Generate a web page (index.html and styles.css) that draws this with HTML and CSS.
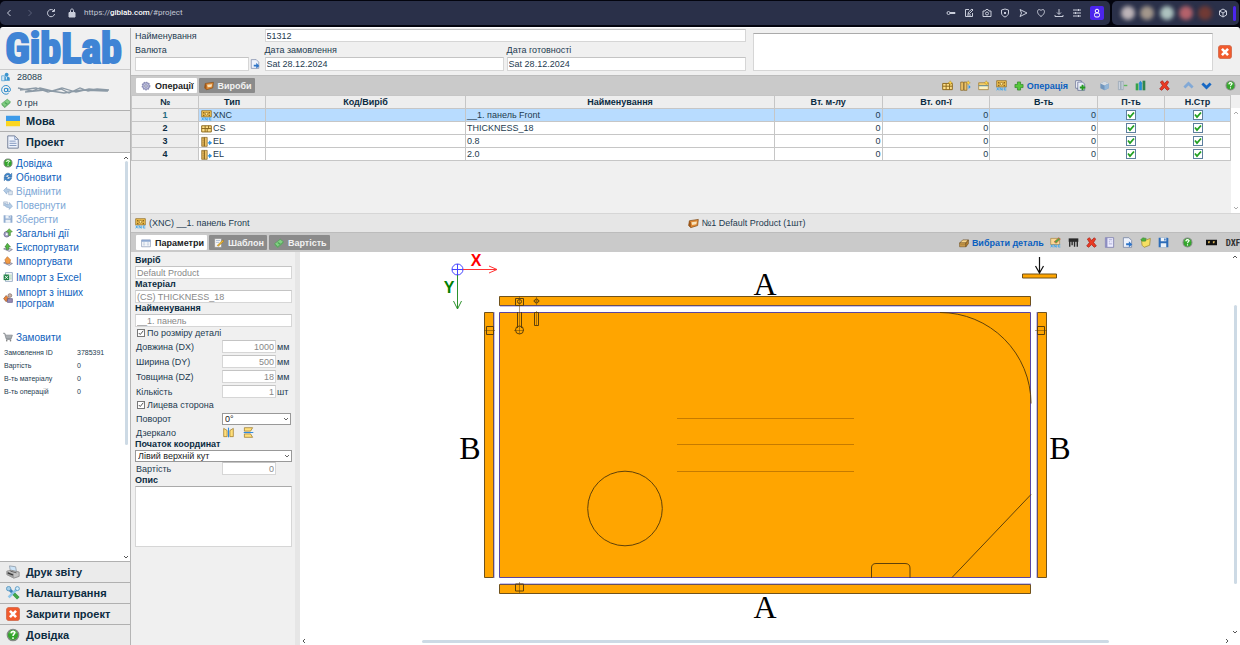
FILE: index.html
```html
<!DOCTYPE html>
<html lang="uk">
<head>
<meta charset="utf-8">
<meta name="viewport" content="width=device-width, initial-scale=1">
<title>GibLab</title>
<link rel="stylesheet" href="styles.css">
</head>
<body>
<svg class="sprite" aria-hidden="true">
  <symbol id="gear" viewBox="0 0 16 16"><circle cx="8" cy="8" r="5.5" fill="#b9bbdc" stroke="#8f91b8" stroke-width="3" stroke-dasharray="2.4 1.2"/><circle cx="8" cy="8" r="5.2" fill="#c0c2e2" stroke="#7779a3"/><circle cx="8" cy="8" r="2" fill="#eee" stroke="#696b91"/></symbol>
  <symbol id="product" viewBox="0 0 16 16"><path d="M2 4l13-2-1 9-10 3-3-3z" fill="#e08a35" stroke="#7d4a17"/><path d="M5 6l8-1-1 4-6 1z" fill="#f8e3bb"/><path d="M2 4l2 2v8l-3-3z" fill="#9a561a"/></symbol>
  <symbol id="xnc" viewBox="0 0 16 16"><path d="M1 1h14v9H1z" fill="#f3c453" stroke="#86611a"/><path d="M3 3h2v2H3zM11 3h2v2h-2zM3 7h2v2H3zM11 7h2v2h-2z" fill="#86611a"/><circle cx="8" cy="5.500" r="2" fill="#ffe89c" stroke="#86611a"/><path d="M1 11l3 4M4 11l-3 4M6 15v-4l3 4v-4M15 11.500h-3v3h3" fill="none" stroke="#3aa4ea" stroke-width="1.300"/></symbol>
  <symbol id="cs" viewBox="0 0 16 16"><path d="M1 4h14v9H1zM1 8h14M6 4v9M11 4v5M9 8v5" fill="#ffe089" stroke="#8d681d" stroke-width="1.400"/></symbol>
  <symbol id="el" viewBox="0 0 16 16"><path d="M1 2h4v13H1zM5 2h4v13H5z" fill="#eec266" stroke="#82601f"/><path d="M3 3v11" stroke="#82601f" stroke-dasharray="2 1"/><path d="M10 10h3M12.500 8L15 10l-2.500 2z" stroke="#2c94e4" stroke-width="1.500" fill="#2c94e4"/></symbol>
  <symbol id="cs-new" viewBox="0 0 16 16"><path d="M1 5h14v9H1zM1 9h14M6 5v9M11 5v9" fill="#ffe089" stroke="#8d681d" stroke-width="1.400"/><path d="M12 1l1 2 2 1-2 1-1 2-1-2-2-1 2-1z" fill="#ffd84b" stroke="#a8801b" stroke-width=".5"/></symbol>
  <symbol id="el-new" viewBox="0 0 16 16"><path d="M1 3h4v12H1zM6 3h4v12H6z" fill="#eec266" stroke="#82601f"/><path d="M11 10h4M12.500 7l3 3-3 3z" fill="#2c94e4"/><path d="M12 1l1 2 2 1-2 1-1 2-1-2-2-1 2-1z" fill="#ffd84b" stroke="#a8801b" stroke-width=".5"/></symbol>
  <symbol id="strip-new" viewBox="0 0 16 16"><path d="M1 4h14v4H1z" fill="#f4cf6d" stroke="#9a762a"/><path d="M1 8h14v6H1z" fill="#fff3c0" stroke="#9a762a"/><path d="M1 8.500h14" stroke="#3a9be0"/><path d="M12 1l1 2 2 1-2 1-1 2-1-2-2-1 2-1z" fill="#ffd84b" stroke="#a8801b" stroke-width=".5"/></symbol>
  <symbol id="plus" viewBox="0 0 16 16"><path d="M5.500 1.500h5v4h4v5h-4v4h-5v-4h-4v-5h4z" fill="#56c73c" stroke="#247f1c"/></symbol>
  <symbol id="copy" viewBox="0 0 16 16"><path d="M1 1h8v11H1z" fill="#fff" stroke="#535f8c"/><path d="M4 3h7l3 3v9H4z" fill="#e9ecf7" stroke="#535f8c"/><path d="M11 7v8M7 11h8" stroke="#249a21" stroke-width="2.800"/></symbol>
  <symbol id="cube-blue" viewBox="0 0 16 16"><path d="M2 5l6-3 6 3v7l-6 3-6-3z" fill="#7196bd"/><path d="M2 5l6-3 6 3-6 3z" fill="#d7dce2"/><path d="M8 8l6-3v7l-6 3z" fill="#93b6d8"/></symbol>
  <symbol id="split" viewBox="0 0 16 16"><path d="M2 2h3v12H2zM6 2h3v12H6z" fill="#ccd5df" stroke="#91a0b1"/><path d="M10 8h5" stroke="#5cba5d" stroke-width="2"/></symbol>
  <symbol id="chart" viewBox="0 0 16 16"><path d="M1 5h4v10H1z" fill="#37a34a"/><path d="M6 4h4v11H6zM5 5l3-4 3 4z" fill="#258ed4"/><path d="M11 1h4v14h-4z" fill="#31854d"/></symbol>
  <symbol id="delete" viewBox="0 0 16 16"><path d="M2 3l3-2 3 4 4-4 2 2-3 5 4 5-3 2-4-4-4 4-3-2 4-5z" fill="#ea3b23" stroke="#a51a12"/></symbol>
  <symbol id="up" viewBox="0 0 16 16"><path d="M2 11l6-6 6 6" fill="none" stroke="#82a9d6" stroke-width="4"/></symbol>
  <symbol id="down" viewBox="0 0 16 16"><path d="M2 5l6 6 6-6" fill="none" stroke="#1768c4" stroke-width="4"/></symbol>
  <symbol id="help" viewBox="0 0 16 16"><circle cx="8" cy="8" r="6.500" fill="#34a62c" stroke="#858a86" stroke-width="1.500"/><path d="M3.500 6a5 5 0 019 0z" fill="#8cdc7c"/><path d="M6 6c0-3 4-3 4-.5C10 7 8 7 8 9M8 10.500v2" stroke="#fff" stroke-width="1.600" fill="none"/></symbol>
  <symbol id="refresh" viewBox="0 0 16 16"><path d="M2 7c1-5 7-7 10-3l2-2v6H8l2-2C8 4 5 5 5 7zM14 9c-1 5-7 7-10 3l-2 2V8h6l-2 2c2 2 5 1 5-1z" fill="#3e86cb" stroke="#245c98" stroke-width=".7"/></symbol>
  <symbol id="undo" viewBox="0 0 16 16"><path d="M1 7l5-5v3c6-1 9 3 7 9-1-4-3-5-7-4v3z" fill="#b4cce5" stroke="#8aa8cb"/><path d="M9 8h6v6H9z" fill="#dce5ef" stroke="#9db1c9"/></symbol>
  <symbol id="redo" viewBox="0 0 16 16"><path d="M1 3h6v6H1z" fill="#dce5ef" stroke="#9db1c9"/><path d="M15 10l-5 5v-3c-5 0-8-2-7-7 2 3 4 3 7 2V4z" fill="#b4cce5" stroke="#8aa8cb"/></symbol>
  <symbol id="save-off" viewBox="0 0 16 16"><path d="M1 2h13l1 1v11H1z" fill="#91acd0"/><path d="M4 2h8v5H4zM4 9h8v5H4z" fill="#edf2f8"/><path d="M9 3h2v3H9z" fill="#91acd0"/></symbol>
  <symbol id="save" viewBox="0 0 16 16"><path d="M1 1h13l1 1v13H1z" fill="#2c6cb8"/><path d="M4 1h8v5H4zM4 9h8v6H4z" fill="#edf2f8"/><path d="M9 2h2v3H9z" fill="#2c6cb8"/></symbol>
  <symbol id="actions" viewBox="0 0 16 16"><circle cx="6" cy="10" r="4.500" fill="#a9a6ca" stroke="#59577c"/><circle cx="6" cy="10" r="1.500" fill="#fff"/><path d="M5 6l5-5 5 5-3 1v5H9V7z" fill="#69b84f" stroke="#3d7d31" stroke-width=".7"/></symbol>
  <symbol id="export" viewBox="0 0 16 16"><path d="M1 11l5-2 9 3-5 3z" fill="#d5d8e7" stroke="#67657b"/><path d="M3 8L7 2l5 6H9v4H5V8z" fill="#54b844" stroke="#286c22" stroke-width=".8"/></symbol>
  <symbol id="import" viewBox="0 0 16 16"><path d="M1 11l5-2 9 3-5 3z" fill="#d5d8e7" stroke="#67657b"/><path d="M3 6L7 1l5 5-1 6H5z" fill="#f19a43" stroke="#a65a1e" stroke-width=".8"/></symbol>
  <symbol id="excel" viewBox="0 0 16 16"><path d="M4 1h11v14H4z" fill="#fff" stroke="#6685a7"/><path d="M1 4h9v9H1z" fill="#208244"/><path d="M3 6l5 5M8 6l-5 5" stroke="#fff" stroke-width="1.500"/><path d="M11 5h3M11 8h3M11 11h3" stroke="#6bae77"/></symbol>
  <symbol id="other" viewBox="0 0 16 16"><path d="M1 9l4-5 5 5-5 5z" fill="#e98236" stroke="#7f5439"/><circle cx="11" cy="4" r="3" fill="#cbb1a5" stroke="#775f5b"/><path d="M7 9h8v6H7z" fill="#9b8db6" stroke="#544b76"/></symbol>
  <symbol id="cart" viewBox="0 0 16 16"><path d="M0 2h3l1 3h11l-2 6H5L3 4" fill="#a9adb1" stroke="#777c81"/><path d="M5 12h8" stroke="#777c81"/><circle cx="6" cy="14" r="1.300" fill="#777"/><circle cx="12" cy="14" r="1.300" fill="#777"/></symbol>
  <symbol id="users" viewBox="0 0 16 16"><circle cx="9" cy="4" r="3" fill="#3b94ce"/><path d="M5 14V9l2-2h4l3 2v5z" fill="#3b94ce"/><path d="M1 6h5v8H1z" fill="#d2e8f6" stroke="#3b94ce"/><path d="M8.500 8v4" stroke="#fff" stroke-width="1.500"/></symbol>
  <symbol id="at" viewBox="0 0 16 16"><circle cx="8" cy="8" r="2.800" fill="none" stroke="#2787c8" stroke-width="1.700"/><path d="M11 5v4c0 3 4 2 4-1a7 7 0 10-3 5.500" fill="none" stroke="#2787c8" stroke-width="1.500"/></symbol>
  <symbol id="money" viewBox="0 0 16 16"><path d="M1 9l9-7 5 4-9 8z" fill="#82cf83" stroke="#4a9a52"/><path d="M1 9v2l5 5 9-8V6l-9 8z" fill="#5dac62"/><path d="M6 7l4 3" stroke="#4da557" stroke-width="2"/></symbol>
  <symbol id="flag" viewBox="0 0 16 16"><path d="M0 2h16v7H0z" fill="#3d9be9"/><path d="M0 8h16v6H0z" fill="#fcd620"/></symbol>
  <symbol id="page" viewBox="0 0 16 16"><path d="M2 1h8l4 4v10H2z" fill="#edf2fc" stroke="#67758f"/><path d="M10 1v4h4M4 7h7M4 9.500h8M4 12h8" fill="none" stroke="#7890b8"/></symbol>
  <symbol id="print" viewBox="0 0 16 16"><path d="M4 1l7 1 1 6-7-1z" fill="#cde4f7" stroke="#93a0ad"/><path d="M1 7l5-1 9 2v5l-6 2-8-4z" fill="#c4c4c4" stroke="#8a8a8a"/><path d="M1 7l8 3v5l-8-4z" fill="#9d9d9d"/><path d="M2 9l6 2.500" stroke="#333" stroke-width="1.300"/><path d="M5 7l7 2" stroke="#555"/></symbol>
  <symbol id="tools" viewBox="0 0 16 16"><path d="M2 2l12 12" stroke="#397fb7" stroke-width="3.500"/><path d="M14 2L3 13" stroke="#8ec5e8" stroke-width="3"/><path d="M9 9l5 5" stroke="#44a746" stroke-width="4"/><circle cx="3" cy="3" r="2.500" fill="#a6cfe9" stroke="#5797c1"/><circle cx="13" cy="3" r="2.300" fill="#d3edfb" stroke="#5797c1"/></symbol>
  <symbol id="close" viewBox="0 0 16 16"><rect x=".5" y=".5" width="15" height="15" rx="3" fill="#f15b2d" stroke="#d0694c"/><path d="M4.500 4.500l7 7M11.500 4.500l-7 7" stroke="#fff" stroke-width="3"/></symbol>
  <symbol id="form" viewBox="0 0 16 16"><path d="M1 3h14v11H1z" fill="#fff" stroke="#7589aa"/><path d="M1 3h14v3H1z" fill="#8ba7d1"/><path d="M3 8h4M9 8h4M3 11h4M9 11h4" stroke="#8aa3c5"/></symbol>
  <symbol id="edit" viewBox="0 0 16 16"><path d="M1 1h11v14H1z" fill="#f8f8f8" stroke="#8a8a8a"/><path d="M3 4h7M3 7h5" stroke="#8da5c6"/><path d="M5 12L14 3l2 2-9 8z" fill="#eeb833" stroke="#8a621d" stroke-width=".7"/></symbol>
  <symbol id="doc-go" viewBox="0 0 16 16"><path d="M2 1h8l4 4v10H2z" fill="#edf2fc" stroke="#66779c"/><path d="M6 9h4V6l5 5-5 4v-3H6z" fill="#2f75c7"/></symbol>
  <symbol id="board" viewBox="0 0 16 16"><path d="M1 8l5-5h9l-4 5z" fill="#f7d58c" stroke="#6a4919"/><path d="M1 8h10v6H1z" fill="#e4b158" stroke="#6a4919"/><path d="M11 8l4-5v6l-4 5z" fill="#b98433" stroke="#6a4919"/><path d="M2 11h8" stroke="#6a4919"/></symbol>
  <symbol id="xnc-edit" viewBox="0 0 16 16"><path d="M1 2h13v9H1z" fill="#f9d795" stroke="#a58343"/><path d="M6 7l7-6 2 2-6 6z" fill="#4bac42" stroke="#d35742"/><path d="M1 11l3 4M4 11l-3 4M6 15v-4l3 4v-4M15 11.500h-3v3h3" fill="none" stroke="#3aa4ea" stroke-width="1.300"/></symbol>
  <symbol id="comb" viewBox="0 0 16 16"><path d="M1 2h14v5H1z" fill="#292929"/><path d="M2.500 3v11M6 3v9M9.500 3v11M13.500 3v11" stroke="#292929" stroke-width="2"/></symbol>
  <symbol id="panel" viewBox="0 0 16 16"><path d="M2 1h12v14H2z" fill="#eef" stroke="#6b6ca3"/><path d="M2 1h3v14H2z" fill="#8d8ec1"/><path d="M7 4h5M7 7h2M11 7h1M7 10h5" stroke="#8d8ec1"/></symbol>
  <symbol id="folder" viewBox="0 0 16 16"><path d="M2 4l5 1 8-3-1 10-8 3-3-3z" fill="#f5df62" stroke="#98832b"/><path d="M1 4l3-3 5 1-1 4H3z" fill="#4eae3e" stroke="#2f7a29" stroke-width=".6"/></symbol>
  <symbol id="mask" viewBox="0 0 16 16"><path d="M0 4h16v8H0z" fill="#111"/><path d="M3 6h3l-1 3H3zM10 6h3l-1 3h-2z" fill="#ddb75a"/></symbol>
  <symbol id="mirror" viewBox="0 0 16 16"><path d="M1 2l5 3v9H1zM15 2l-5 3v9h5z" fill="#ffdf7a" stroke="#94701f"/><path d="M8 1v14" stroke="#2e8be0" stroke-width="1.600"/></symbol>
</svg>

<header class="browser">
  <div class="browser-main">
    <nav class="browser-nav" aria-label="Browser">
      <svg viewBox="0 0 10 10"><path d="M6.500 2L3.500 5l3 3"/></svg>
      <svg class="dim" viewBox="0 0 10 10"><path d="M3.500 2l3 3-3 3"/></svg>
      <svg viewBox="0 0 10 10"><path d="M8 3a3.600 3.600 0 10.600 3M8.500 1v2.500H6"/></svg>
      <svg class="lock" viewBox="0 0 10 10"><path class="solid" d="M2 4.500h6V9H2z"/><path d="M3.500 5V2.500c0-2 3-2 3 0V5"/></svg>
    </nav>
    <span class="url">https://<b>giblab.com</b>/#project</span>
    <div class="browser-tools">
      <svg viewBox="0 0 10 10"><circle cx="2.500" cy="5" r="1.500"/><path d="M4 4.500h5v1H4M7.500 5.500V6"/></svg>
      <svg viewBox="0 0 10 10"><path d="M5 1.500H1.500v7h7V5M4 6l.5-2L8 1l1 1-3.500 3.500zM3 7h4"/></svg>
      <svg viewBox="0 0 10 10"><path d="M1 3h2l1-1.500h2L7 3h2v5.500H1z"/><circle cx="5" cy="5.500" r="1.500"/></svg>
      <svg viewBox="0 0 10 10"><path d="M5 1l3.500 1v3c0 2-2 3.500-3.500 4C3.500 8.500 1.500 7 1.500 5V2zM4 4l2 2M6 4L4 6"/></svg>
      <svg viewBox="0 0 10 10"><path d="M2 1.500L9 5 2 8.500 3.500 5z"/></svg>
      <svg viewBox="0 0 10 10"><path d="M5 8.500C-1 4.500 2-.5 5 2.500c3-3 6 2 0 6z"/></svg>
      <svg viewBox="0 0 10 10"><path d="M5 1v5M3 4.500l2 2 2-2M1 7v1.500h8V7"/></svg>
      <svg viewBox="0 0 10 10"><path d="M1 2h8M1 5h8M1 8h8M6.500 1v2M3.500 4v2M6.500 7v2"/></svg>
      <span class="profile"><svg viewBox="0 0 10 10"><circle cx="5" cy="3" r="1.800"/><rect x="2.500" y="5" width="5" height="4" rx="1.500"/></svg></span>
    </div>
  </div>
  <div class="browser-side">
    <i class="blob blob-a"></i><i class="blob blob-b"></i><i class="blob blob-c"></i><i class="blob blob-d"></i><i class="blob blob-e"></i>
    <svg viewBox="0 0 10 10"><path d="M5 1l3.500 2v4L5 9 1.500 7V3zM1.500 3L5 5l3.500-2M5 5v4"/></svg>
    <i class="handle"></i>
  </div>
</header>

<div class="app">
  <aside class="sidebar">
    <h1 class="logo">GibLab</h1>
    <ul class="account">
      <li><svg class="icon-s"><use href="#users"/></svg>28088</li>
      <li><svg class="icon-s"><use href="#at"/></svg><svg class="scribble" viewBox="0 0 94 10"><path d="M1 3l14 3 8-3 12 3 9-2 8 4 11-5 8 3 9-2 12 1M3 5l16-2 12 4 14-4 14 4 13-3 19 2M8 7l20-2 19 3 18-3 24 1"/></svg></li>
      <li><svg class="icon-s"><use href="#money"/></svg>0 грн</li>
    </ul>
    <button class="section"><svg class="icon-l"><use href="#flag"/></svg>Мова</button>
    <button class="section"><svg class="icon-l"><use href="#page"/></svg>Проект</button>
    <div class="menu">
      <div class="menu-body">
        <nav class="menu-links">
          <a href="#help"><svg class="icon-s"><use href="#help"/></svg>Довідка</a>
          <a href="#refresh"><svg class="icon-s"><use href="#refresh"/></svg>Обновити</a>
          <a class="off" href="#undo"><svg class="icon-s"><use href="#undo"/></svg>Відмінити</a>
          <a class="off" href="#redo"><svg class="icon-s"><use href="#redo"/></svg>Повернути</a>
          <a class="off" href="#save"><svg class="icon-s"><use href="#save-off"/></svg>Зберегти</a>
          <a href="#actions"><svg class="icon-s"><use href="#actions"/></svg>Загальні дії</a>
          <a href="#export"><svg class="icon-s"><use href="#export"/></svg>Експортувати</a>
          <a href="#import"><svg class="icon-s"><use href="#import"/></svg>Імпортувати</a>
          <a class="tall" href="#excel"><svg class="icon-s"><use href="#excel"/></svg>Імпорт з Excel</a>
          <a class="double" href="#other"><svg class="icon-s"><use href="#other"/></svg><span>Імпорт з інших<br>програм</span></a>
          <a class="order" href="#order"><svg class="icon-s"><use href="#cart"/></svg>Замовити</a>
        </nav>
        <dl class="totals">
          <dt>Замовлення ID</dt><dd>3785391</dd>
          <dt>Вартість</dt><dd>0</dd>
          <dt>В-ть матеріалу</dt><dd>0</dd>
          <dt>В-ть операцій</dt><dd>0</dd>
        </dl>
      </div>
      <div class="vbar menu-bar"><svg viewBox="0 0 6 6"><path d="M1 4l2-2 2 2"/></svg><i></i><svg viewBox="0 0 6 6"><path d="M1 2l2 2 2-2"/></svg></div>
    </div>
    <button class="section"><svg class="icon-l"><use href="#print"/></svg>Друк звіту</button>
    <button class="section"><svg class="icon-l"><use href="#tools"/></svg>Налаштування</button>
    <button class="section"><svg class="icon-l"><use href="#close"/></svg>Закрити проект</button>
    <button class="section"><svg class="icon-l"><use href="#help"/></svg>Довідка</button>
  </aside>

  <main class="main">
    <form class="order-head">
      <div class="order-fields">
        <label for="name">Найменування</label>
        <input class="field wide" id="name" value="51312">
        <label for="currency">Валюта</label>
        <label for="ordered">Дата замовлення</label>
        <label for="ready">Дата готовності</label>
        <span class="currency"><input class="field" id="currency"><button type="button" class="bare" aria-label="Оновити"><svg class="icon-s"><use href="#doc-go"/></svg></button></span>
        <input class="field" id="ordered" value="Sat 28.12.2024">
        <input class="field" id="ready" value="Sat 28.12.2024">
      </div>
      <textarea class="field note" aria-label="Примітка"></textarea>
      <button type="button" class="bare" aria-label="Закрити"><svg class="icon-l"><use href="#close"/></svg></button>
    </form>

    <div class="tabbar">
      <button class="tab active"><svg class="icon-s"><use href="#gear"/></svg>Операції</button>
      <button class="tab"><svg class="icon-s"><use href="#product"/></svg>Вироби</button>
      <div class="tools">
        <button aria-label="Розкрій"><svg class="icon-m"><use href="#cs-new"/></svg></button>
        <button aria-label="Кромка"><svg class="icon-m"><use href="#el-new"/></svg></button>
        <button aria-label="Смуга"><svg class="icon-m"><use href="#strip-new"/></svg></button>
        <button aria-label="XNC"><svg class="icon-m"><use href="#xnc"/></svg></button>
        <button class="labelled"><svg class="icon-s"><use href="#plus"/></svg>Операція</button>
        <button aria-label="Копіювати"><svg class="icon-m"><use href="#copy"/></svg></button>
        <button class="gap" aria-label="Матеріал"><svg class="icon-m"><use href="#cube-blue"/></svg></button>
        <button aria-label="Поділити"><svg class="icon-m"><use href="#split"/></svg></button>
        <button aria-label="Сортувати"><svg class="icon-m"><use href="#chart"/></svg></button>
        <button class="gap" aria-label="Видалити"><svg class="icon-m"><use href="#delete"/></svg></button>
        <button class="gap" aria-label="Вгору"><svg class="icon-m"><use href="#up"/></svg></button>
        <button aria-label="Вниз"><svg class="icon-m"><use href="#down"/></svg></button>
        <button class="gap" aria-label="Довідка"><svg class="icon-m"><use href="#help"/></svg></button>
      </div>
    </div>

    <div class="ops">
      <table>
        <colgroup><col class="c-s"><col class="c-s"><col class="c-code"><col class="c-name"><col class="c-num"><col class="c-num"><col class="c-num"><col class="c-s"><col class="c-s"></colgroup>
        <thead><tr><th>№</th><th>Тип</th><th>Код/Виріб</th><th>Найменування</th><th>Вт. м-лу</th><th>Вт. оп-ї</th><th>В-ть</th><th>П-ть</th><th>Н.Стр</th></tr></thead>
        <tbody>
          <tr class="selected"><th>1</th><td><span class="type"><svg class="icon-m"><use href="#xnc"/></svg>XNC</span></td><td></td><td>__1. панель Front</td><td class="num">0</td><td class="num">0</td><td class="num">0</td><td class="mid"><input type="checkbox" checked aria-label="П-ть 1"></td><td class="mid"><input type="checkbox" checked aria-label="Н.Стр 1"></td></tr>
          <tr><th>2</th><td><span class="type"><svg class="icon-m"><use href="#cs"/></svg>CS</span></td><td></td><td>THICKNESS_18</td><td class="num">0</td><td class="num">0</td><td class="num">0</td><td class="mid"><input type="checkbox" checked aria-label="П-ть 2"></td><td class="mid"><input type="checkbox" checked aria-label="Н.Стр 2"></td></tr>
          <tr><th>3</th><td><span class="type"><svg class="icon-m"><use href="#el"/></svg>EL</span></td><td></td><td>0.8</td><td class="num">0</td><td class="num">0</td><td class="num">0</td><td class="mid"><input type="checkbox" checked aria-label="П-ть 3"></td><td class="mid"><input type="checkbox" checked aria-label="Н.Стр 3"></td></tr>
          <tr><th>4</th><td><span class="type"><svg class="icon-m"><use href="#el"/></svg>EL</span></td><td></td><td>2.0</td><td class="num">0</td><td class="num">0</td><td class="num">0</td><td class="mid"><input type="checkbox" checked aria-label="П-ть 4"></td><td class="mid"><input type="checkbox" checked aria-label="Н.Стр 4"></td></tr>
        </tbody>
      </table>
      <div class="ops-side"><div class="vbar faint"><svg viewBox="0 0 6 6"><path d="M1 4l2-2 2 2"/></svg><svg viewBox="0 0 6 6"><path d="M1 2l2 2 2-2"/></svg></div></div>
    </div>

    <div class="crumbs">
      <span><svg class="icon-m"><use href="#xnc"/></svg>(XNC) __1. панель Front</span>
      <span><svg class="icon-m"><use href="#product"/></svg>№1 Default Product (1шт)</span>
    </div>

    <div class="tabbar">
      <button class="tab active"><svg class="icon-s"><use href="#form"/></svg>Параметри</button>
      <button class="tab"><svg class="icon-s"><use href="#edit"/></svg>Шаблон</button>
      <button class="tab"><svg class="icon-s"><use href="#money"/></svg>Вартість</button>
      <div class="tools flush">
        <button class="labelled"><svg class="icon-s"><use href="#board"/></svg>Вибрати деталь</button>
        <button aria-label="Редагувати"><svg class="icon-m"><use href="#xnc-edit"/></svg></button>
        <button aria-label="Пази"><svg class="icon-m"><use href="#comb"/></svg></button>
        <button aria-label="Видалити"><svg class="icon-m"><use href="#delete"/></svg></button>
        <button aria-label="Панель"><svg class="icon-m"><use href="#panel"/></svg></button>
        <button aria-label="Перейти"><svg class="icon-m"><use href="#doc-go"/></svg></button>
        <button aria-label="Відкрити"><svg class="icon-m"><use href="#folder"/></svg></button>
        <button aria-label="Зберегти"><svg class="icon-m"><use href="#save"/></svg></button>
        <button class="gap" aria-label="Довідка"><svg class="icon-m"><use href="#help"/></svg></button>
        <button class="gap" aria-label="Вигляд"><svg class="icon-m"><use href="#mask"/></svg></button>
        <button class="dxf">DXF</button>
      </div>
    </div>

    <div class="work">
      <form class="params">
        <label class="head" for="p-product">Виріб</label>
        <input class="field" id="p-product" value="Default Product" disabled>
        <label class="head" for="p-material">Матеріал</label>
        <input class="field" id="p-material" value="(CS) THICKNESS_18" disabled>
        <label class="head" for="p-name">Найменування</label>
        <input class="field" id="p-name" value="__1. панель" disabled>
        <label class="check"><input type="checkbox" checked>По розміру деталі</label>
        <div class="row"><label for="dx">Довжина (DX)</label><input class="field num" id="dx" value="1000" disabled><span>мм</span></div>
        <div class="row"><label for="dy">Ширина (DY)</label><input class="field num" id="dy" value="500" disabled><span>мм</span></div>
        <div class="row"><label for="dz">Товщина (DZ)</label><input class="field num" id="dz" value="18" disabled><span>мм</span></div>
        <div class="row"><label for="qty">Кількість</label><input class="field num" id="qty" value="1" disabled><span>шт</span></div>
        <label class="check"><input type="checkbox" checked>Лицева сторона</label>
        <div class="row"><label for="turn">Поворот</label><select class="field turn" id="turn"><option>0°</option></select></div>
        <div class="row mirror"><span>Дзеркало</span><button type="button" class="bare" aria-label="Дзеркало по X"><svg class="icon-m"><use href="#mirror"/></svg></button><button type="button" class="bare rotated" aria-label="Дзеркало по Y"><svg class="icon-m"><use href="#mirror"/></svg></button></div>
        <label class="head" for="origin">Початок координат</label>
        <select class="field" id="origin"><option>Лівий верхній кут</option></select>
        <div class="row short"><label for="cost">Вартість</label><input class="field num" id="cost" value="0" disabled></div>
        <label class="head" for="desc">Опис</label>
        <textarea class="field desc" id="desc"></textarea>
      </form>
      <div class="canvas">
        <svg class="drawing" viewBox="300 252 931 384" preserveAspectRatio="xMinYMin meet" role="img" aria-label="Креслення панелі">
          <g fill="none" stroke="#44f"><circle cx="457.500" cy="269.500" r="5.500"/><path d="M452 269.500h11M457.500 264v11"/></g>
          <path d="M463 269.500h34M489 266l8 3.500-8 3.500" fill="none" stroke="#f33"/>
          <path d="M457.500 275v34M453.500 301l4 8 4-8" fill="none" stroke="#2d922d"/>
          <text class="axis" x="476" y="266" fill="#f00">X</text>
          <text class="axis" x="449" y="293" fill="#008000">Y</text>
          <g fill="#ffa500" stroke="#70521c">
            <path d="M499.500 296.500h531v9h-531zM484.500 312.500h9v265h-9zM1037.500 312.500h9v265h-9zM499.500 584.500h531v9h-531z"/>
            <path d="M499.500 312.500h531v265h-531z" stroke="#5a46a0"/>
            <path d="M1022.500 274h34v4h-34z"/>
          </g>
          <path d="M500 306h531M494 312v266M1037 312v266M500 584h531" stroke="#5a4fd0" fill="none" opacity=".7"/>
          <g fill="none" stroke="#5f410a">
            <path d="M940 312.500a91 91 0 0191 91M1031 494.500l-79 83M871.500 578v-10q0-4.500 4.500-4.500h29q5 0 5 4.500v10"/>
            <circle cx="625" cy="508.500" r="37.300"/>
            <path d="M677 418.500h177M677 444.500h177M677 471.500h177" stroke="#c67b00"/>
            <path d="M515.500 298.500h8v7h-8zM517.500 312v16M521.500 312v16M534.500 312.500h4v13h-4zM486.500 326.500h7v8h-7zM1037.500 326.500h7v8h-7zM515.500 584h8v7h-8z"/>
            <circle cx="519.500" cy="301.500" r="2"/><circle cx="536.500" cy="301" r="2"/><circle cx="519.500" cy="330" r="4"/>
            <path d="M519.500 296v38M514 330.500h10M536.500 297v8M536.500 311v15M533 301h7M484 330.500h11M1035 330.500h12M519.500 582v11" stroke-width=".5"/>
          </g>
          <path d="M1039.500 257v16M1035.500 266l4 7 4-7" fill="none" stroke="#111" stroke-width="1.200"/>
          <g class="side"><text x="765" y="295">A</text><text x="765" y="618">A</text><text x="470" y="459">B</text><text x="1060" y="459">B</text></g>
        </svg>
        <div class="vbar draw-bar"><svg viewBox="0 0 6 6"><path d="M1 4l2-2 2 2"/></svg><i></i><svg viewBox="0 0 6 6"><path d="M1 2l2 2 2-2"/></svg></div>
        <div class="hbar"><svg viewBox="0 0 6 6"><path d="M4 1L2 3l2 2"/></svg><i></i><svg viewBox="0 0 6 6"><path d="M2 1l2 2-2 2"/></svg></div>
      </div>
    </div>
  </main>
</div>
</body>
</html>
```
FILE: styles.css
```css
* { box-sizing: border-box; }
html, body { height: 100%; }
body {
  margin: 0;
  display: flex;
  flex-direction: column;
  overflow: hidden;
  background: #03040e;
  color: #1d3b50;
  font: 9px/12px "Liberation Sans", sans-serif;
}
button, input, select, textarea { font: inherit; color: inherit; margin: 0; }
button { border: 0; background: none; padding: 0; }
svg { flex: none; display: block; }
.sprite { position: absolute; width: 0; height: 0; }
.icon-s { width: 10px; height: 10px; }
.icon-m { width: 11px; height: 11px; }
.icon-l { width: 14px; height: 14px; }
.bare { display: flex; }

/* browser chrome */
.browser { flex: none; height: 27px; display: flex; gap: 2px; padding: 1px 1px 2px 0; }
.browser-main, .browser-side { display: flex; align-items: center; background: #2a3049; border-radius: 5px; }
.browser-main { flex: 1; padding: 0 6px 0 4px; }
.browser-side { width: 127px; padding: 0 3px 0 9px; justify-content: space-between; }
.browser svg { width: 10px; height: 10px; fill: none; stroke: #c9cddb; stroke-width: 1; }
.browser svg .solid { fill: #c9cddb; }
.browser-nav { display: flex; gap: 11px; }
.browser-nav .dim { stroke: #5b617a; }
.url { margin-left: 7px; font: 8px/12px Roboto, sans-serif; color: #c3c7d4; }
.url b { font-weight: 500; color: #fff; }
.browser-tools { margin-left: auto; display: flex; align-items: center; gap: 8px; }
.profile { display: flex; padding: 2px; border-radius: 2px; background: #4c25ee; }
.browser .profile svg { stroke: #fff; }
.blob { width: 14px; height: 14px; border-radius: 50%; filter: blur(2px); }
.blob-a { background: #bdb4b8; }
.blob-b { background: #a3978c; }
.blob-c { background: #adc2bf; }
.blob-d { background: #b4626b; }
.blob-e { background: #713a35; }
.handle { width: 3px; height: 15px; border-radius: 2px; background: #4c25ee; }

.app { flex: 1; min-height: 0; display: flex; background: #f0f0f0; border-top: 1px solid #fff; border-radius: 3px 3px 0 0; }

/* sidebar */
.sidebar { width: 131px; flex: none; display: flex; flex-direction: column; border-right: 1px solid #b5b5b5; }
.logo {
  margin: 0;
  height: 42px;
  padding-right: 3px;
  border-bottom: 1px solid #ccc;
  text-align: center;
  white-space: nowrap;
  color: #3f84d5;
  font: bold 42px/41px "Liberation Sans Narrow", "Roboto Condensed", "Open Sans Condensed", sans-serif;
  -webkit-text-stroke: 2px #3f84d5;
}
.account { list-style: none; margin: 0; padding: 0 0 1px; }
.account li { height: 13px; display: flex; align-items: center; gap: 6px; padding-left: 1px; }
.scribble { width: 94px; height: 10px; fill: none; stroke: #8c9aa6; stroke-width: 1.3; }
.section {
  flex: none;
  height: 21px;
  display: flex;
  align-items: center;
  gap: 6px;
  padding-left: 6px;
  border-top: 1px solid #b0b0b0;
  background: #ebebeb;
  color: #0b2b41;
  font-weight: bold;
  font-size: 11px;
}
.menu { flex: 1; min-height: 0; display: flex; background: #fff; border-top: 1px solid #b0b0b0; }
.menu-body { flex: 1; padding-top: 3px; }
.menu-links { display: flex; flex-direction: column; font-size: 10px; line-height: 11px; }
.menu-links a { height: 14px; display: flex; align-items: center; gap: 3px; padding-left: 3px; color: #0f62bd; text-decoration: none; white-space: nowrap; }
.menu-links .off { color: #7da7d6; }
.menu-links .tall { height: 18px; }
.menu-links .double { height: 24px; }
.menu-links .order { height: 18px; margin-top: 18px; }
.totals { margin: 0; padding-left: 4px; display: grid; grid-template-columns: 73px 1fr; font-size: 7px; line-height: 13px; }
.totals dd { margin: 0; }

/* scrollbars */
.vbar { width: 8px; flex: none; display: flex; flex-direction: column; align-items: center; justify-content: space-between; }
.vbar svg, .hbar svg { width: 6px; height: 6px; fill: none; stroke: #555; }
.vbar i { width: 3px; background: #cddae5; border-radius: 2px; }
.menu-bar { padding: 2px 0 1px; }
.menu-bar i { flex: 0 1 70%; margin-bottom: auto; }
.draw-bar { padding: 2px 0; }
.draw-bar i { flex: 0 1 73%; }
.faint svg { stroke: #aaa; }
.hbar { grid-column: 1 / -1; display: flex; align-items: center; justify-content: space-between; padding: 0 10px 0 1px; }
.hbar i { flex: 0 1 74%; height: 3px; background: #cddae5; border-radius: 2px; }

/* fields */
.field { min-width: 0; width: 100%; height: 14px; padding: 0 1px; border: 1px solid #d6d6d6; border-top-color: #c4c4c4; border-radius: 0; background: #fff; }
.field:disabled { height: 13px; color: #888; }
textarea.field { resize: none; display: block; border-top-color: #aaa; }
select.field {
  height: 12px;
  appearance: none;
  padding: 0 2px;
  border-color: #999;
  color: #222;
  line-height: 10px;
  background: #fff url("data:image/svg+xml,%3Csvg xmlns='http://www.w3.org/2000/svg' viewBox='0 0 6 6'%3E%3Cpath d='M1 2l2 2 2-2' fill='none' stroke='%23666'/%3E%3C/svg%3E") no-repeat right 1px center / 6px 6px;
}
.num { text-align: right; }

/* order header */
.main { flex: 1; min-width: 0; display: flex; flex-direction: column; }
.order-head { height: 47px; flex: none; display: flex; align-items: center; gap: 5px; padding: 0 8px 0 4px; }
.order-fields { flex: 613; display: grid; grid-template-columns: 127fr 240fr 240fr; column-gap: 3px; grid-template-rows: 15px 13px 15px; align-items: center; align-self: start; }
.order-fields .wide { grid-column: span 2; height: 13px; }
.currency { display: flex; align-items: center; gap: 1px; padding-right: 2px; }
.note { flex: 458; height: 38px; margin-left: 2px; }

/* tab bars */
.tabbar { flex: none; height: 20px; display: flex; align-items: center; gap: 2px; padding-left: 5px; background: #cacaca; border-top: 1px solid #bcbcbc; overflow: hidden; }
.tab { flex: none; height: 15px; display: flex; align-items: center; gap: 4px; padding: 0 3px 0 5px; background: #8b8b8b; color: #f2f2f2; font-weight: bold; border-radius: 1px; }
.tab.active { background: #fff; color: #222; }
.tools { margin-left: auto; padding-right: 1px; display: flex; align-items: center; flex: none; }
.tools.flush { padding-right: 0; }
.tools button { width: 18px; height: 16px; display: flex; align-items: center; justify-content: center; }
.tools .gap { margin-left: 6px; }
.tools .labelled { width: auto; gap: 3px; padding: 0 3px; color: #0a5fc0; font-weight: bold; }
.tools .dxf { width: auto; padding-left: 5px; color: #333; font: bold 9px/12px "Liberation Sans Narrow", "Roboto Condensed", "Open Sans Condensed", sans-serif; }

/* operations table */
.ops { flex: none; height: 118px; display: flex; }
.ops table { flex: 1; align-self: flex-start; table-layout: fixed; border-collapse: collapse; }
.ops tr { height: 13px; }
.ops th, .ops td { height: 13px; padding: 0 1px; line-height: 12px; border: 1px solid #c6c6c6; white-space: nowrap; }
.ops th { background: #eee; color: #0b2b41; }
.ops td { background: #fff; }
.ops .selected td { background: #b8dcff; }
.ops .selected th { color: #256a80; }
.c-s { width: 6.1%; }
.c-code { width: 18.2%; }
.c-name { width: 28.1%; }
.c-num { width: 9.8%; }
.type { display: flex; align-items: center; gap: 1px; padding-left: 1px; }
.mid { text-align: center; }
.mid input, .check input { appearance: none; background: #fff no-repeat center / contain; }
.mid input {
  display: block;
  width: 10px;
  height: 10px;
  margin: 0 auto;
  border: 1px solid #5d7f9e;
  background-image: url("data:image/svg+xml,%3Csvg xmlns='http://www.w3.org/2000/svg' viewBox='0 0 8 8'%3E%3Cpath d='M1 3.500l2 2.500 4-4.500' fill='none' stroke='%2322a022' stroke-width='1.800'/%3E%3C/svg%3E");
}
.ops-side { width: 9px; display: flex; padding-top: 13px; }
.ops-side .vbar { flex: 1; background: #fff; padding: 2px 0; }

.crumbs { flex: none; height: 19px; display: grid; grid-template-columns: 1fr 1fr; align-items: center; padding-left: 4px; background: #e6e6e6; border-top: 1px solid #d6d6d6; }
.crumbs span { display: flex; align-items: center; gap: 3px; }

/* parameters */
.work { flex: 1; min-height: 0; display: flex; }
.params { width: 169px; flex: none; display: flex; flex-direction: column; padding: 3px 4px 0; border-right: 5px solid #e6e6e6; }
.params > .field { width: 157px; }
.head { color: #0b2b41; font-weight: bold; line-height: 11px; }
.check { display: flex; align-items: center; gap: 2px; height: 12px; padding-left: 2px; }
.check input {
  width: 8px;
  height: 8px;
  border: 1px solid #777;
  background-image: url("data:image/svg+xml,%3Csvg xmlns='http://www.w3.org/2000/svg' viewBox='0 0 8 8'%3E%3Cpath d='M1 4l2 2 4-5' fill='none' stroke='%23444' stroke-width='1.200'/%3E%3C/svg%3E");
}
.row { height: 15px; display: grid; grid-template-columns: 85px 54px 1fr; column-gap: 1px; align-items: center; padding-left: 1px; }
.row .turn { width: 69px; }
.row.short { height: 13px; }
.params .mirror { height: 13px; display: flex; gap: 9px; }
.mirror span { width: 78px; }
.rotated { transform: rotate(90deg); }
.params .desc { height: 61px; }

/* drawing */
.canvas { flex: 1; min-width: 0; display: grid; grid-template-columns: minmax(0, 1fr) 9px; grid-template-rows: minmax(0, 1fr) 8px; background: #fff; }
.drawing { width: 100%; height: 100%; }
.axis { font: bold 16px "Liberation Sans", sans-serif; text-anchor: middle; }
.side { font: 32px "Liberation Serif", serif; text-anchor: middle; fill: #000; }
```
